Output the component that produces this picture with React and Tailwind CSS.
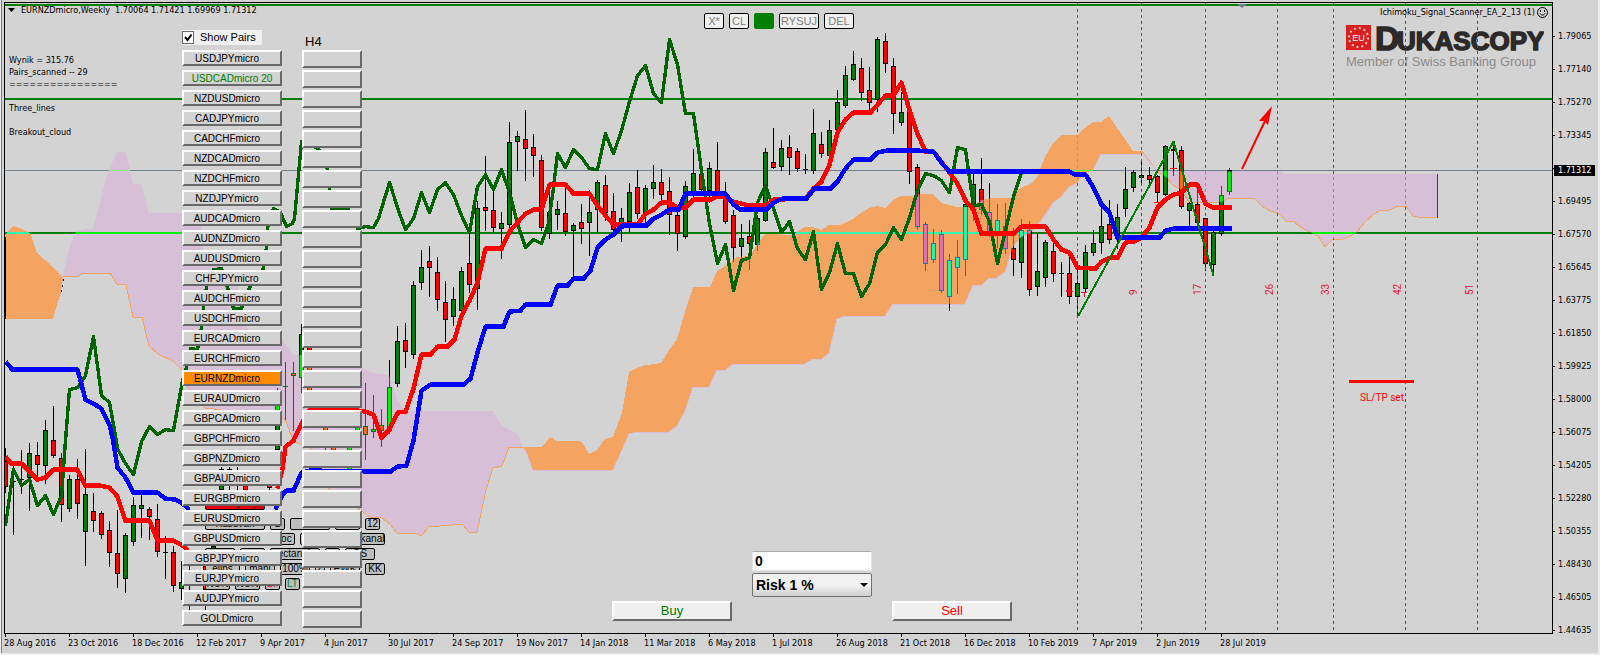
import React from "react";

const PAIRS = [
  "USDJPYmicro", "USDCADmicro 20", "NZDUSDmicro", "CADJPYmicro", "CADCHFmicro", "NZDCADmicro",
  "NZDCHFmicro", "NZDJPYmicro", "AUDCADmicro", "AUDNZDmicro", "AUDUSDmicro", "CHFJPYmicro",
  "AUDCHFmicro", "USDCHFmicro", "EURCADmicro", "EURCHFmicro", "EURNZDmicro", "EURAUDmicro",
  "GBPCADmicro", "GBPCHFmicro", "GBPNZDmicro", "GBPAUDmicro", "EURGBPmicro", "EURUSDmicro",
  "GBPUSDmicro", "GBPJPYmicro", "EURJPYmicro", "AUDJPYmicro", "GOLDmicro",
];

const PRICES = [
  "1.79065", "1.77140", "1.75270", "1.73345", "", "1.69495", "1.67570", "1.65645", "1.63775",
  "1.61850", "1.59925", "1.58000", "1.56075", "1.54205", "1.52280", "1.50355", "1.48430",
  "1.46505", "1.44635",
];

const DATES = [
  "28 Aug 2016", "23 Oct 2016", "18 Dec 2016", "12 Feb 2017", "9 Apr 2017", "4 Jun 2017",
  "30 Jul 2017", "24 Sep 2017", "19 Nov 2017", "14 Jan 2018", "11 Mar 2018", "6 May 2018",
  "1 Jul 2018", "26 Aug 2018", "21 Oct 2018", "16 Dec 2018", "10 Feb 2019", "7 Apr 2019",
  "2 Jun 2019", "28 Jul 2019",
];

// x, direction (g = up, r = down), body top, body bottom, wick top, wick bottom
const CANDLES = [
  [5, "r", 461, 487, 448, 492], [13, "g", 481, 482, 465, 534], [21, "g", 479, 480, 450, 493],
  [29, "g", 453, 478, 443, 510], [37, "r", 455, 465, 442, 476], [45, "g", 430, 466, 420, 483],
  [53, "r", 440, 456, 406, 457], [61, "r", 458, 505, 453, 521], [69, "g", 479, 509, 475, 511],
  [77, "r", 479, 504, 459, 518], [85, "g", 494, 532, 449, 565], [93, "r", 511, 521, 493, 531],
  [101, "r", 513, 535, 511, 538], [109, "r", 530, 553, 521, 566], [117, "r", 553, 574, 510, 587],
  [125, "g", 535, 579, 533, 592], [133, "g", 505, 542, 497, 545], [141, "g", 505, 509, 493, 537],
  [149, "r", 509, 517, 507, 539], [157, "r", 519, 552, 504, 556], [165, "g", 552, 553, 536, 578],
  [173, "r", 552, 586, 546, 591], [181, "g", 582, 589, 561, 599], [189, "g", 575, 580, 560, 610],
  [205, "r", 560, 590, 550, 610], [213, "g", 546, 560, 540, 565], [221, "g", 469, 490, 467, 495],
  [229, "r", 469, 480, 467, 490], [237, "g", 476, 477, 467, 490], [245, "r", 480, 491, 470, 495],
  [269, "r", 480, 488, 470, 490], [277, "g", 400, 450, 388, 455], [285, "g", 386, 387, 362, 419],
  [293, "r", 373, 376, 362, 430], [301, "g", 334, 378, 324, 392], [309, "r", 345, 391, 340, 395],
  [325, "r", 405, 431, 400, 450], [333, "r", 440, 460, 430, 465], [349, "g", 440, 470, 430, 475],
  [357, "g", 415, 431, 409, 431], [365, "r", 426, 435, 383, 459], [373, "g", 429, 432, 395, 437],
  [381, "r", 425, 431, 409, 446], [389, "g", 387, 430, 360, 433], [397, "g", 341, 384, 326, 386],
  [405, "r", 340, 352, 323, 367], [413, "g", 285, 355, 281, 358], [421, "g", 267, 283, 250, 289],
  [429, "r", 261, 268, 246, 296], [437, "r", 272, 300, 257, 310], [445, "r", 302, 320, 281, 341],
  [453, "g", 299, 317, 287, 325], [461, "g", 271, 311, 267, 315], [469, "r", 263, 285, 234, 292],
  [477, "g", 208, 289, 201, 309], [485, "r", 207, 211, 156, 230], [493, "r", 210, 228, 186, 231],
  [501, "g", 223, 229, 212, 258], [509, "g", 142, 225, 122, 229], [517, "g", 136, 142, 131, 170],
  [525, "r", 139, 149, 110, 180], [533, "r", 147, 156, 134, 176], [541, "r", 160, 228, 155, 230],
  [549, "g", 212, 234, 190, 238], [557, "g", 209, 215, 201, 229], [565, "r", 213, 232, 186, 235],
  [573, "g", 225, 231, 223, 276], [581, "r", 222, 229, 204, 243], [589, "g", 212, 223, 190, 255],
  [597, "g", 182, 210, 180, 231], [605, "r", 185, 213, 175, 220], [613, "r", 211, 230, 193, 232],
  [621, "g", 218, 229, 208, 241], [629, "g", 192, 222, 183, 231], [637, "r", 187, 214, 170, 218],
  [645, "g", 188, 214, 185, 224], [653, "g", 182, 189, 165, 198], [661, "r", 182, 195, 169, 199],
  [669, "r", 191, 215, 177, 234], [677, "r", 215, 234, 211, 250], [685, "g", 186, 237, 181, 238],
  [693, "g", 173, 192, 149, 198], [701, "r", 174, 190, 173, 192], [709, "g", 168, 191, 162, 202],
  [717, "r", 170, 192, 142, 196], [725, "r", 193, 222, 182, 223], [733, "r", 215, 248, 210, 261],
  [741, "g", 238, 247, 224, 260], [749, "r", 236, 244, 220, 269], [757, "g", 218, 245, 215, 250],
  [765, "g", 152, 221, 148, 221], [773, "r", 162, 168, 128, 168], [781, "g", 148, 167, 140, 170],
  [789, "r", 147, 158, 135, 174], [797, "r", 151, 169, 148, 171], [805, "g", 169, 170, 154, 173],
  [813, "g", 133, 171, 109, 173], [821, "r", 144, 154, 132, 157], [829, "g", 130, 156, 120, 156],
  [837, "g", 102, 130, 90, 130], [845, "g", 75, 106, 66, 107], [853, "g", 64, 80, 51, 80],
  [861, "r", 68, 93, 58, 100], [869, "r", 90, 103, 67, 112], [877, "g", 39, 100, 37, 111],
  [885, "r", 41, 64, 33, 72], [893, "r", 66, 114, 58, 133], [901, "g", 112, 123, 92, 125],
  [909, "r", 112, 172, 105, 183], [917, "r", 167, 227, 164, 229], [925, "r", 224, 264, 222, 270],
  [933, "g", 243, 260, 229, 262], [941, "r", 234, 291, 230, 292], [949, "g", 260, 297, 254, 310],
  [957, "g", 257, 268, 240, 293], [965, "g", 204, 260, 195, 275], [973, "g", 184, 207, 174, 220],
  [981, "r", 189, 210, 158, 214], [989, "r", 212, 233, 183, 236], [997, "g", 220, 232, 204, 247],
  [1005, "r", 226, 249, 203, 253], [1013, "r", 248, 260, 228, 275], [1021, "g", 230, 263, 219, 277],
  [1029, "r", 230, 290, 221, 295], [1037, "g", 271, 287, 233, 295], [1045, "g", 242, 278, 240, 286],
  [1053, "r", 251, 274, 239, 281], [1061, "g", 273, 274, 262, 296], [1069, "r", 273, 297, 252, 303],
  [1077, "g", 283, 297, 265, 315], [1085, "g", 252, 289, 245, 292], [1093, "g", 243, 253, 230, 255],
  [1101, "g", 226, 243, 203, 253], [1109, "r", 224, 240, 200, 243], [1117, "g", 217, 236, 204, 248],
  [1125, "g", 189, 209, 167, 216], [1133, "g", 172, 188, 170, 191], [1141, "g", 175, 178, 159, 185],
  [1149, "r", 175, 180, 167, 182], [1157, "r", 176, 193, 175, 202], [1165, "g", 146, 195, 145, 195],
  [1173, "g", 149, 151, 145, 175], [1181, "r", 150, 207, 146, 208], [1189, "g", 203, 211, 202, 226],
  [1197, "r", 204, 223, 188, 224], [1205, "r", 218, 264, 218, 270], [1213, "g", 232, 265, 230, 271],
  [1221, "g", 195, 234, 186, 235], [1229, "g", 171, 192, 168, 194],
];

const ORANGE_LEFT = "5,235 13,226 22,229 30,233 37,253 45,260 62,276 63,278 61,292 57,305 53,319 5,319";

const PURPLE_TOP =
  "63,276 70,245 77,230 93,229 96,218 108,172 117,152 126,152 133,184 141,184 149,213 200,213 203,248 238,287 248,330 282,339 293,355 350,355 362,368 372,373 389,375 397,400 405,411 493,411 502,426 509,429 517,434 523,447";
const PURPLE_BOTTOM_REVERSED =
  "523,447 509,447 502,466 493,468 486,490 477,532 469,532 462,524 429,527 421,536 415,533 397,533 390,524 382,518 370,517 360,510 328,488 310,448 296,442 292,437 285,419 214,409 205,408 188,388 182,370 173,361 158,354 149,346 142,317 133,317 126,285 117,284 110,273 84,273 78,276 63,276";

const ORANGE_MAIN_TOP =
  "523,447 542,447 550,437 557,441 577,441 582,442 589,454 597,450 605,439 613,437 622,413 629,372 637,368 645,365 657,364 662,362 669,350 677,339 685,312 693,287 710,287 717,271 725,266 737,257 750,256 757,245 765,234 792,235 800,230 805,227 813,227 821,230 829,225 840,225 845,223 853,219 861,213 869,208 877,206 885,208 893,200 901,196 913,196 922,194 933,194 941,203 957,207 972,207 982,200 992,198 1010,198 1021,188 1030,184 1037,177 1045,157 1053,143 1061,135 1077,135 1085,128 1093,122 1101,122 1109,116 1117,128 1125,139 1133,151 1142,151";
const ORANGE_MAIN_BOTTOM =
  "1142,154 1101,154 1093,170 1085,174 1077,183 1069,187 1061,197 1053,203 1045,215 1038,225 1030,233 1021,237 1013,247 1005,272 997,278 989,278 982,285 973,285 965,304 893,304 885,316 845,316 837,319 829,353 822,359 813,359 805,364 733,364 726,370 717,370 709,387 693,387 685,411 677,426 669,432 637,432 629,434 622,450 613,470 533,471 527,454 523,447";

const PURPLE_RIGHT_TOP = "1157,171 1281,171 1285,174 1437,174";
const PURPLE_RIGHT_BOTTOM =
  "1437,217 1418,217 1413,216 1406,206 1398,206 1390,210 1381,210 1374,214 1365,222 1357,232 1349,237 1343,239 1333,239 1325,247 1318,236 1310,232 1302,228 1294,222 1286,221 1278,213 1270,211 1262,206 1254,198 1229,198 1221,202 1189,202 1181,190 1173,185 1166,177 1157,171";

const CHIKOU =
  "5,525 13,469 21,485 29,479 37,505 45,495 53,514 61,495 65,440 69,389 77,387 85,375 93,336 101,395 109,402 115,435 117,448 125,463 133,474 141,441 149,426 157,434 165,429 173,430 182,380 186,367 190,348 197,349 201,327 203,308 206,286 213,269 221,268 227,287 233,308 241,308 249,287 263,268 266,247 267,227 273,208 280,212 286,226 292,223 294,218 301,141 318,148 327,169 329,189 331,209 348,209 357,228 365,226 373,227 378,218 381,208 389,182 399,213 405,229 413,218 421,192 429,212 437,189 445,182 453,194 461,215 469,232 477,186 485,174 493,189 501,169 509,192 517,223 525,247 533,239 541,243 548,223 553,187 557,153 565,167 573,149 581,157 589,168 597,169 605,133 613,153 621,130 629,101 637,75 645,65 653,93 661,102 669,39 677,64 685,113 693,113 701,170 709,223 717,263 725,244 733,290 741,260 749,257 757,202 765,185 773,208 781,232 789,221 797,248 805,259 813,231 821,289 829,272 837,243 845,273 853,273 861,296 869,283 877,252 885,244 893,227 901,239 909,217 917,190 925,173 933,175 941,180 949,192 957,147 965,149 973,205 981,204 989,221 997,263 1005,230 1013,196 1021,172";

const TENKAN_LEFT =
  "5,456 11,463 21,463 29,471 37,479 45,477 53,469 77,469 85,485 100,485 109,487 117,496 125,520 149,520 157,540 173,540 181,544 188,550";
const TENKAN =
  "277,488 282,468 285,446 293,440 301,423 309,409 349,409 365,411 373,414 381,437 389,429 397,412 405,411 413,388 421,354 430,354 437,346 447,346 454,339 461,315 469,300 477,282 485,248 501,248 509,231 517,222 525,213 533,209 541,209 549,184 565,184 573,193 589,193 597,205 605,215 613,224 637,224 645,213 653,209 661,202 669,202 677,207 685,207 693,199 710,199 717,196 725,197 733,201 749,205 765,205 773,199 805,198 813,188 821,181 829,164 837,132 845,119 853,112 870,112 885,95 893,95 901,82 909,110 917,133 925,151 933,151 949,172 957,183 965,200 973,209 981,233 1013,233 1021,226 1045,226 1053,239 1061,249 1069,252 1077,267 1095,268 1101,261 1110,257 1117,257 1125,242 1133,241 1141,237 1149,227 1157,207 1165,199 1173,194 1181,192 1189,184 1197,184 1205,203 1213,207 1231,207";

const KIJUN_LEFT =
  "5,361 12,369 77,369 85,399 93,403 101,408 109,424 112,437 117,467 125,477 133,492 157,492 165,498 175,499 182,503 189,509";
const KIJUN =
  "275,509 282,494 286,490 293,490 301,472 309,470 390,471 397,466 406,465 413,440 421,390 430,384 463,384 470,378 477,352 485,326 503,326 509,311 520,310 525,304 550,304 557,285 567,285 573,278 583,278 590,270 597,247 605,239 613,234 622,225 646,225 653,218 661,214 669,209 678,209 685,193 725,193 733,204 740,209 766,209 773,202 782,198 806,198 814,188 830,188 837,181 845,168 853,159 870,159 877,152 886,150 917,150 933,151 941,162 949,171 1069,171 1075,174 1085,174 1093,187 1101,204 1109,212 1117,237 1159,237 1165,230 1173,228 1231,228";

const CYCLES = [
  [1077, ""], [1141, "9"], [1205, "17"], [1277, "26"], [1333, "33"], [1405, "42"], [1477, "51"],
];

const TOOLS = [
  [["AT objekty", "w-[60px]", "hot"]],
  [["Kasuvan", "w-[60px]"], ["Ł", "w-[15px]"], ["LT", "w-[40px]"], ["", "w-[25px]"], ["12", "w-[15px]"]],
  [["", "w-[60px]"], ["bloc", "w-[25px]"], ["", "w-[55px]"], ["kanal", "w-[25px]"]],
  [["", "w-[30px]"], ["", "w-[25px]"], ["rectangle", "w-[50px]"], ["", "w-[15px]"], ["OS", "w-[30px]"]],
  [["elips", "w-[35px]"], ["manl", "w-[30px]"], ["100%", "w-[30px]"], ["Z", "w-[10px]"], ["EWK", "w-[30px]"], ["KK", "w-[20px]"]],
  [["NON", "w-[25px]"], ["NON", "w-[25px]"], ["LT", "w-[15px]", "red"], ["LT", "w-[15px]", "green"]],
];

function Candles({ up, down, line }) {
  return CANDLES.map(([x, dir, top, bottom, high, low]) => {
    const flat = bottom - top < 3;
    return (
      <g key={x}>
        <rect x={x} y={high} width="1" height={low - high + 1} fill={line} />
        <rect x={x - 2} y={top} width="5" height={bottom - top} fill={line} />
        {!flat && (
          <rect x={x - 1} y={top + 1} width="3" height={bottom - top - 2} fill={dir === "g" ? up : down} />
        )}
      </g>
    );
  });
}

function Levels({ level, bid }) {
  return (
    <>
      <rect x="0" y="232" width="4000" height="2" fill={level} />
      <rect x="0" y="170" width="4000" height="1" fill={bid} />
    </>
  );
}

function Chart() {
  return (
    <svg className="absolute inset-0 h-full w-full" shapeRendering="crispEdges" aria-hidden="true">
      <defs>
        <clipPath id="orangeCloud">
          <polygon points={ORANGE_LEFT} />
          <polygon points={`${ORANGE_MAIN_TOP} ${ORANGE_MAIN_BOTTOM}`} />
        </clipPath>
        <clipPath id="purpleCloud">
          <polygon points={`${PURPLE_TOP} ${PURPLE_BOTTOM_REVERSED}`} />
          <polygon points={`${PURPLE_RIGHT_TOP} ${PURPLE_RIGHT_BOTTOM}`} />
        </clipPath>
      </defs>
      <g transform="translate(-5 -3)">
        <polygon points={`${PURPLE_TOP} ${PURPLE_BOTTOM_REVERSED}`} fill="#d8bfd8" />
        <polygon points={`${PURPLE_RIGHT_TOP} ${PURPLE_RIGHT_BOTTOM}`} fill="#d8bfd8" />
        <polygon points={ORANGE_LEFT} fill="#f4a460" />
        <polygon points={`${ORANGE_MAIN_TOP} ${ORANGE_MAIN_BOTTOM}`} fill="#f4a460" />
        <polyline points={PURPLE_BOTTOM_REVERSED} fill="none" stroke="#f4a460" />
        <polyline points={PURPLE_RIGHT_BOTTOM} fill="none" stroke="#f4a460" />
        <polyline points="1142,151 1150,162 1157,171" fill="none" stroke="#f4a460" />
        <polyline points="1144,155 1150,163 1157,171" fill="none" stroke="#d8bfd8" />
        <polyline points={ORANGE_MAIN_BOTTOM} fill="none" stroke="#d8bfd8" />
        <rect x="5" y="237" width="1" height="82" fill="#000" />
        <path d="M63 279v2M62 285v2M61 290v2" stroke="#000" />
        <rect x="1437" y="174" width="1" height="44" fill="#006400" />

        <rect x="0" y="4" width="4000" height="2" fill="#008000" />
        <rect x="0" y="98" width="4000" height="2" fill="#008000" />
        <Levels level="#008000" bid="#708090" />
        <Candles up="#008000" down="#ff0000" line="#000000" />
        <g clipPath="url(#orangeCloud)">
          <Levels level="#2cf7b3" bid="#2cf7b3" />
          <Candles up="#26f5a8" down="#d873ae" line="#1f77b4" />
        </g>
        <g clipPath="url(#purpleCloud)">
          <rect x="0" y="232" width="4000" height="2" fill="#00f000" />
          <rect x="100" y="170" width="40" height="1" fill="#80ef80" />
          <Candles up="#0be80b" down="#f0700f" line="#107010" />
        </g>
        <rect x="1227" y="170" width="5" height="1" fill="#000" />
        <rect x="1170" y="168" width="7" height="1" fill="#f00" />
        <rect x="1154" y="202" width="7" height="1" fill="#f00" />

        {CYCLES.map(([x]) => (
          <line key={x} x1={x + 0.5} x2={x + 0.5} y1="3" y2="630" stroke="#dc143c" strokeDasharray="3 3" />
        ))}
        <g clipPath="url(#orangeCloud)">
          <line x1="1077.5" x2="1077.5" y1="3" y2="630" stroke="#fb7070" strokeDasharray="3 3" />
        </g>
        <g clipPath="url(#purpleCloud)" stroke="#d8704c" strokeDasharray="3 3">
          <line x1="1205.5" x2="1205.5" y1="3" y2="630" />
          <line x1="1277.5" x2="1277.5" y1="3" y2="630" />
          <line x1="1333.5" x2="1333.5" y1="3" y2="630" />
          <line x1="1405.5" x2="1405.5" y1="3" y2="630" />
        </g>

        <g fill="none" strokeLinejoin="round" transform="translate(0.5 0.6)">
          <polyline points={CHIKOU} stroke="#006400" strokeWidth="3.400" />
          <polyline points={TENKAN_LEFT} stroke="#ff0000" strokeWidth="4.500" />
          <polyline points={TENKAN} stroke="#ff0000" strokeWidth="4.500" />
          <polyline points={KIJUN_LEFT} stroke="#0000ff" strokeWidth="4.500" />
          <polyline points={KIJUN} stroke="#0000ff" strokeWidth="4.500" />
          <path d="M1075 170h17" stroke="#40ff20" />
          <polyline points="1078,315 1173,141 1213,275" stroke="#008000" strokeWidth="2" />
        </g>
        <path d="M1080 293h2v2h-2zM1085 293h3v2h-3z" fill="#fff" />
        <path d="M1066 290h2v2h-2zM1071 291h2v1h-2zM1081 292h6v1h-6zM1084 293h1v4h-1z" fill="#dc143c" />

        <g shapeRendering="auto">
          <path d="M1242 169L1265 121" stroke="#f00" strokeWidth="2" />
          <path d="M1272 106L1259 121L1264 121L1268 125Z" fill="#f00" />
          <path d="M1237 4h10l-5 4z" fill="#708090" />
        </g>
        <rect x="1349" y="380" width="65" height="3" fill="#f00" />
        <g fill="#dc143c" fontSize="10" fontFamily="Roboto, sans-serif">
          {CYCLES.map(([x, label]) => (
            <text key={x} transform={`translate(${x - 4} 295) rotate(-90)`}>{label}</text>
          ))}
        </g>
        <text x="1360" y="401" fill="#f00" fontSize="10" fontFamily="Roboto, sans-serif">
          SL/TP set
        </text>
      </g>
    </svg>
  );
}

function Logo() {
  return (
    <div className="absolute top-[22px] right-2 flex flex-col font-['Liberation_Sans',Arial,sans-serif]">
      <svg width="198" height="29" aria-label="Dukascopy">
        <rect width="25" height="25" fill="#d8201f" />
        <circle cx="12.500" cy="12.500" r="9.500" fill="none" stroke="#f6c9c4" strokeWidth="2" strokeDasharray="2 2.970" />
        <text x="12.500" y="16" textAnchor="middle" fontSize="9" fill="#fff">EU</text>
        <g fill="#2b2a29" stroke="#2b2a29" strokeWidth="1.500" fontWeight="700">
          <text x="29" y="25" fontSize="34">D</text>
          <text x="51" y="25" fontSize="26">UKASCOPY</text>
        </g>
      </svg>
      <span className="text-[13px] leading-4 text-[#8c8c8c]">Member of Swiss Banking Group</span>
    </div>
  );
}

const RAISED =
  "border-t-2 border-l-2 border-r-2 border-b-2 border-t-white border-l-white border-r-[#696969] border-b-[#696969]";

function DrawingTools() {
  return (
    <div className="absolute top-[492px] left-[200px] flex flex-col gap-[3px] text-[10px] font-['Liberation_Sans',Arial,sans-serif]">
      {TOOLS.map((row, i) => (
        <div key={i} className="flex gap-[5px] first:h-5">
          {row.map(([label, width, tone], j) => (
            <button
              key={j}
              type="button"
              aria-label={label || `Tool ${i}-${j}`}
              className={`flex items-center justify-center rounded-xs border border-black leading-none ${width} ${
                tone === "hot" ? "h-[15px] bg-red-600 text-black" : "h-3 bg-[#bebebe]"
              } ${tone === "red" ? "text-red-600" : ""} ${tone === "green" ? "text-green-700" : ""}`}
            >
              {label}
            </button>
          ))}
        </div>
      ))}
    </div>
  );
}

function TopTools() {
  const box = "flex h-4 items-center justify-center rounded-xs border";
  const plain = "border-black bg-[#f0f0f0] text-[#808080]";
  return (
    <div className="mt-2.5 ml-[342px] flex gap-[5px] text-[11px] leading-none font-['Liberation_Sans',Arial,sans-serif]">
      <button type="button" className={`${box} ${plain} w-5`}>X*</button>
      <button type="button" className={`${box} ${plain} w-5`}>CL</button>
      <button type="button" aria-label="Active" className={`${box} w-5 border-[#008000] bg-[#008000]`} />
      <button type="button" className={`${box} ${plain} w-10`}>RYSUJ</button>
      <button type="button" className={`${box} ${plain} w-[30px]`}>DEL</button>
    </div>
  );
}

function OrderPanel() {
  const action = `h-5 w-[120px] bg-[#f0f0f0] text-[13px] leading-4 ${RAISED}`;
  return (
    <div className="mt-auto mb-3 ml-[250px] flex items-end gap-5 font-['Liberation_Sans',Arial,sans-serif]">
      <button type="button" className={`${action} text-[#008000]`}>Buy</button>
      <div className="mb-6 flex w-[120px] flex-col gap-0.5">
        <input
          aria-label="Volume"
          defaultValue="0"
          className="h-5 w-full border border-[#e3e3e3] border-t-[#abadb3] bg-white px-0.5 text-sm font-bold"
        />
        <div className="relative">
          <select
            aria-label="Risk"
            className="h-6 w-full appearance-none rounded-xs border border-[#707070] bg-linear-to-b from-[#f2f2f2] from-50% to-[#cfcfcf] px-[3px] text-sm font-bold"
          >
            <option>Risk 1 %</option>
          </select>
          <svg className="pointer-events-none absolute top-2.5 right-1" width="8" height="4" aria-hidden="true">
            <path d="M0 0h8L4 4z" />
          </svg>
        </div>
      </div>
      <button type="button" className={`${action} text-[#ff0000]`}>Sell</button>
    </div>
  );
}

function PairColumn() {
  return (
    <div className="flex w-[100px] shrink-0 flex-col font-['Liberation_Sans',Arial,sans-serif]">
      <label className="mt-[27px] mb-[5px] flex h-[15px] w-20 items-center gap-1.5 bg-[#f0f0f0] text-[11px] leading-none">
        <input type="checkbox" defaultChecked className="peer sr-only" />
        <svg width="12" height="13" aria-hidden="true">
          <rect x="0" y="0" width="12" height="13" fill="#696969" />
          <rect x="1" y="1" width="10" height="11" fill="#fff" />
          <path d="M3 6l2.500 3L9.500 3.500" fill="none" stroke="#000" strokeWidth="2" />
        </svg>
        Show Pairs
      </label>
      <div className="flex flex-col gap-1">
        {PAIRS.map((pair) => (
          <button
            key={pair}
            type="button"
            className={`flex h-4 items-center justify-center pt-0.5 text-[10px] leading-none ${RAISED} ${
              pair === "EURNZDmicro" ? "bg-[#ff8c00]" : "bg-[#d3d3d3]"
            } ${pair.endsWith("20") ? "text-[#008000]" : "pr-2.5 text-black"}`}
          >
            {pair}
          </button>
        ))}
      </div>
    </div>
  );
}

function TimeframeColumn() {
  return (
    <div className="ml-5 flex w-[60px] shrink-0 flex-col font-['Liberation_Sans',Arial,sans-serif]">
      <h2 className="mt-[31px] h-4 pl-[3px] text-[13px] leading-4">H4</h2>
      <div className="flex flex-col gap-0.5">
        {PAIRS.map((pair) => (
          <button key={pair} type="button" aria-label={`${pair} H4`} className={`h-[18px] bg-[#d3d3d3] ${RAISED}`} />
        ))}
      </div>
    </div>
  );
}

export default function App() {
  return (
    <main className="flex min-h-screen flex-col border-r-2 border-b-2 border-l border-[#ececec] bg-[#d3d3d3] text-[9px] text-black font-['DejaVu_Sans_Condensed','DejaVu_Sans',sans-serif]">
      <div className="flex flex-1 flex-col border-l border-[#808080] pt-0.5 pl-0.5">
        <div className="flex">
          <section className="relative flex h-[632px] flex-1 overflow-hidden border border-black">
            <Logo />
            <Chart />
            <DrawingTools />
            <div className="relative flex w-[177px] shrink-0 flex-col">
              <h1 className="mt-px flex h-3 items-center pl-[3px] leading-3 whitespace-pre">
                <svg className="mr-1.5 shrink-0" width="7" height="4" aria-hidden="true">
                  <path d="M0 0h7L3.500 4z" />
                </svg>
                {"EURNZDmicro,Weekly  1.70064 1.71421 1.69969 1.71312"}
              </h1>
              <div className="mt-[38px] pl-1 leading-3">
                <p>Wynik = 315.76</p>
                <p>Pairs_scanned -- 29</p>
                <p>================</p>
                <p className="mt-3">Three_lines</p>
                <p className="mt-3">Breakout_cloud</p>
              </div>
            </div>
            <div className="relative flex flex-1">
              <PairColumn />
              <TimeframeColumn />
              <div className="flex flex-1 flex-col">
                <TopTools />
                <OrderPanel />
              </div>
            </div>
            <p className="absolute top-[3px] right-1 flex items-center gap-0.5 leading-3">
              Ichimoku_Signal_Scanner_EA_2_13 (1)
              <svg width="11" height="11" fill="none" stroke="#000" aria-hidden="true">
                <circle cx="5.500" cy="5.500" r="5" />
                <path d="M3 6.500c1 2 4 2 5 0M3.500 3v2M7.500 3v2" />
              </svg>
            </p>
          </section>
          <aside className="relative h-[632px] w-[45px] pt-[18px]">
            {PRICES.map((price, i) => (
              <div key={i} className="flex h-[33px] items-center gap-[3px]">
                <span className="h-px w-0.5 bg-black" />
                {price}
              </div>
            ))}
            <div className="absolute top-[163px] left-px h-[11px] w-[41px] bg-black pl-1 leading-[11px] text-white">1.71312</div>
          </aside>
        </div>
        <footer className="flex h-[19px]">
          {DATES.map((date) => (
            <div key={date} className="relative w-16 shrink-0 pt-[3px] leading-3 whitespace-nowrap">
              <span className="absolute top-0 left-px h-[3px] w-px bg-black" />
              {date}
            </div>
          ))}
        </footer>
      </div>
    </main>
  );
}
